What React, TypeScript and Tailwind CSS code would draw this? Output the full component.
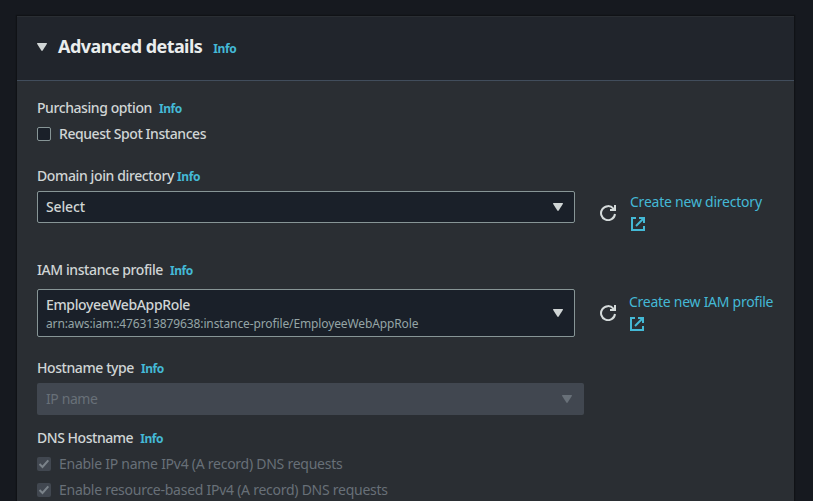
import React from "react";

function Caret({ className = "" }: { className?: string }) {
  return (
    <svg className={`block h-2 w-2.5 shrink-0 ${className}`} viewBox="0 0 10 8" fill="currentColor">
      <path d="M.6 0H9.4Q10.3 0 9.8.9L5.7 7.5Q5 8.3 4.3 7.5L.2.9Q-.3 0 .6 0Z" />
    </svg>
  );
}

function Refresh({ className = "" }: { className?: string }) {
  return (
    <svg className={`block size-4 shrink-0 text-[#d5dbdb] ${className}`} viewBox="0 0 16 16" fill="none" stroke="currentColor" strokeWidth="2">
      <path d="M15 9A7 7 0 1 1 13.4 3.6L14.5 5" />
      <path d="M15 0V5H10" />
    </svg>
  );
}

function External({ className = "" }: { className?: string }) {
  return (
    <svg className={`block size-3.5 text-[#44b9d6] ${className}`} viewBox="0 0 14 14" fill="none" stroke="currentColor" strokeWidth="2">
      <path d="M5 1H1V13H13V9" />
      <path d="M8 1H13V6" />
      <path d="M13 1L5 9" />
    </svg>
  );
}

function Info({ className = "ml-[7px]" }: { className?: string }) {
  return <span className={`text-[12px] font-bold tracking-[-0.4px] text-[#44b9d6] ${className}`}>Info</span>;
}

function Label({ text, tracking, info }: { text: string; tracking: string; info?: string }) {
  return (
    <div className="flex h-[22px] items-baseline whitespace-nowrap">
      <span className={`font-medium ${tracking}`}>{text}</span>
      <Info className={info} />
    </div>
  );
}

function DisabledCheck({ text, tracking }: { text: string; tracking: string }) {
  return (
    <div className="flex h-[22px] items-center gap-2 whitespace-nowrap text-[#687078]">
      <span className="flex size-3.5 shrink-0 rounded-[2px] bg-[#414750]">
        <svg viewBox="0 0 14 14" className="size-3.5" fill="none" stroke="#7b838a" strokeWidth="2">
          <path d="M2.5 7L5.5 10L11.3 3.3" />
        </svg>
      </span>
      <span className={tracking}>{text}</span>
    </div>
  );
}

export default function App() {
  return (
    <div className="h-[501px] w-[813px] overflow-hidden bg-[#16191f] pt-4 pl-[17px] font-['Noto_Sans',sans-serif] text-[14px] leading-[22px] text-[#d0d5d5]">
      <div className="h-[520px] w-[777px] bg-[#2a2e33] shadow-[0_0_1px_1px_#101216]">
        <div className="flex h-[65px] items-center border-t border-b border-t-[#2a2e33] border-b-[#414d5c] bg-[#21252c] pb-[3px] pl-5">
          <Caret />
          <span className="-mt-[3px] ml-[11px] text-[18px] font-bold tracking-[-0.56px] text-[#eaeded]">Advanced details</span>
          <Info className="mt-1 ml-[11px]" />
        </div>
        <div className="flex flex-col px-5 pt-4">
          <Label text="Purchasing option" tracking="tracking-[-0.42px]" />
          <div className="mt-1 flex h-[22px] items-center gap-2">
            <span className="size-3.5 rounded-[2px] border border-[#879596] bg-[#1a2029]" />
            <span className="font-medium tracking-[-0.43px]">Request Spot Instances</span>
          </div>

          <div className="mt-5">
            <Label text="Domain join directory" tracking="tracking-[-0.38px]" info="ml-[3px]" />
          </div>
          <div className="mt-1 flex h-[54px] items-start">
            <div className="flex h-8 w-[538px] shrink-0 items-center justify-between rounded-[2px] border border-[#879596] bg-[#1a2029] pr-[11px] pl-2">
              <span className="font-medium tracking-[-0.15px]">Select</span>
              <Caret />
            </div>
            <Refresh className="mt-3.5 ml-[25px]" />
            <div className="ml-3.5 whitespace-nowrap text-[#44b9d6]">
              <div className="tracking-[-0.23px]">Create new directory</div>
              <External className="mt-1 ml-px" />
            </div>
          </div>

          <div className="mt-3.5">
            <Label text="IAM instance profile" tracking="tracking-[-0.41px]" />
          </div>
          <div className="mt-2 flex h-12 items-start">
            <div className="flex h-12 w-[538px] shrink-0 items-center justify-between rounded-[2px] border border-[#879596] bg-[#1a2029] pr-[11px] pl-2">
              <div>
                <div className="h-[19px] leading-[19px] font-medium tracking-[-0.37px]">EmployeeWebAppRole</div>
                <div className="h-[18px] pt-px text-[12px] leading-[18px] tracking-[-0.12px] text-[#95a5a6]">arn:aws:iam::476313879638:instance-profile/EmployeeWebAppRole</div>
              </div>
              <Caret />
            </div>
            <Refresh className="mt-4 ml-[25px]" />
            <div className="mt-0.5 ml-[13px] whitespace-nowrap text-[#44b9d6]">
              <div className="tracking-[-0.27px]">Create new IAM profile</div>
              <External className="mt-1 ml-px" />
            </div>
          </div>

          <div className="mt-5">
            <Label text="Hostname type" tracking="tracking-[-0.42px]" />
          </div>
          <div className="mt-1 flex h-8 w-[547px] items-center justify-between rounded-[2px] bg-[#414750] pr-3 pl-[9px] text-[#687078]">
            <span className="tracking-[-0.4px]">IP name</span>
            <Caret />
          </div>

          <div className="mt-3">
            <Label text="DNS Hostname" tracking="tracking-[-0.46px]" />
          </div>
          <div className="mt-1 flex flex-col gap-1">
            <DisabledCheck text="Enable IP name IPv4 (A record) DNS requests" tracking="tracking-[-0.26px]" />
            <DisabledCheck text="Enable resource-based IPv4 (A record) DNS requests" tracking="tracking-[-0.26px]" />
          </div>
        </div>
      </div>
    </div>
  );
}
